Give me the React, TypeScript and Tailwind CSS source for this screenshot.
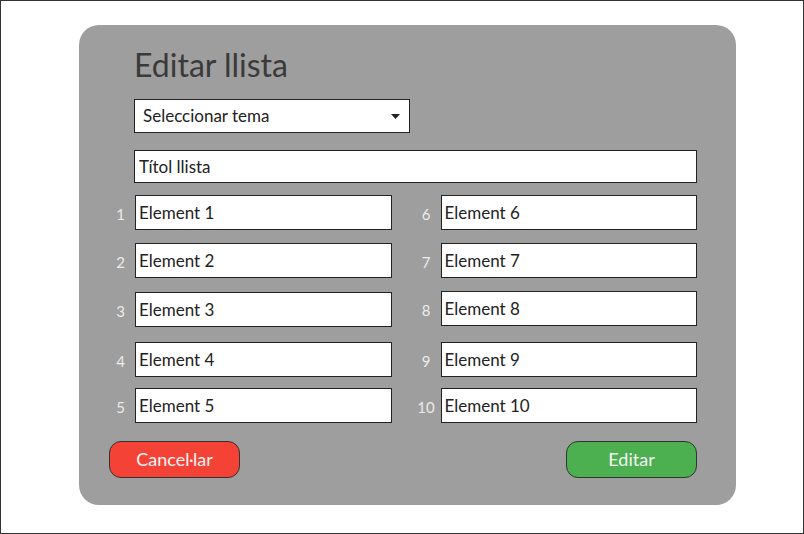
const left = [
  { n: 1, label: "Element 1", mt: "mt-0" },
  { n: 2, label: "Element 2", mt: "mt-[13px]" },
  { n: 3, label: "Element 3", mt: "mt-[14px]" },
  { n: 4, label: "Element 4", mt: "mt-[15px]" },
  { n: 5, label: "Element 5", mt: "mt-[11px]" },
];

const right = [
  { n: 6, label: "Element 6", mt: "mt-0" },
  { n: 7, label: "Element 7", mt: "mt-[13px]" },
  { n: 8, label: "Element 8", mt: "mt-[13px]" },
  { n: 9, label: "Element 9", mt: "mt-[16px]" },
  { n: 10, label: "Element 10", mt: "mt-[11px]" },
];

function Row({ n, label, mt }: { n: number; label: string; mt: string }) {
  return (
    <div className={"flex items-center " + mt}>
      <span className="w-[26px] text-center text-[15px] text-[#ececec] pr-[3px] pt-[3px]">{n}</span>
      <div className="flex-1 h-[35px] bg-white border border-[#222] flex items-center px-[3px] text-[17px] text-[#222]">
        {label}
      </div>
    </div>
  );
}

export default function App() {
  return (
    <div
      className="w-[804px] h-[534px] bg-white border border-[#333] pt-[24px] pl-[78px]"
      style={{ fontFamily: "Lato, 'Open Sans', sans-serif" }}
    >
      <div className="w-[657px] h-[480px] bg-[#9e9e9e] rounded-[20px] pl-[30px] pr-[39px] pt-[17px]">
        <h1 className="ml-[25px] h-[46px] text-[32px] leading-[46px] text-[#3a3a3a]">Editar llista</h1>

        <div className="ml-[25px] mt-[11px] w-[276px] h-[34px] bg-white border border-[#222] flex items-center justify-between pl-[8px] pr-[9px] text-[17px] text-[#222]">
          <span>Seleccionar tema</span>
          <svg width="9" height="5" viewBox="0 0 9 5">
            <path d="M0 0 L9 0 L4.5 5 Z" fill="#222" />
          </svg>
        </div>

        <div className="ml-[25px] mt-[17px] h-[33px] bg-white border border-[#222] flex items-center px-[4px] text-[17px] text-[#222]">
          Títol llista
        </div>

        <div className="grid grid-cols-2 gap-x-[23px] mt-[12px]">
          <div className="flex flex-col">
            {left.map((r) => (
              <Row key={r.n} {...r} />
            ))}
          </div>
          <div className="flex flex-col">
            {right.map((r) => (
              <Row key={r.n} {...r} />
            ))}
          </div>
        </div>

        <div className="flex justify-between mt-[18px]">
          <button className="w-[131px] h-[37px] rounded-[12px] bg-[#f44336] border border-[#333] text-[#f5f5f5] text-[18px]">
            Cancel·lar
          </button>
          <button className="w-[131px] h-[37px] rounded-[12px] bg-[#4caf50] border border-[#333] text-[#f5f5f5] text-[18px]">
            Editar
          </button>
        </div>
      </div>
    </div>
  );
}
